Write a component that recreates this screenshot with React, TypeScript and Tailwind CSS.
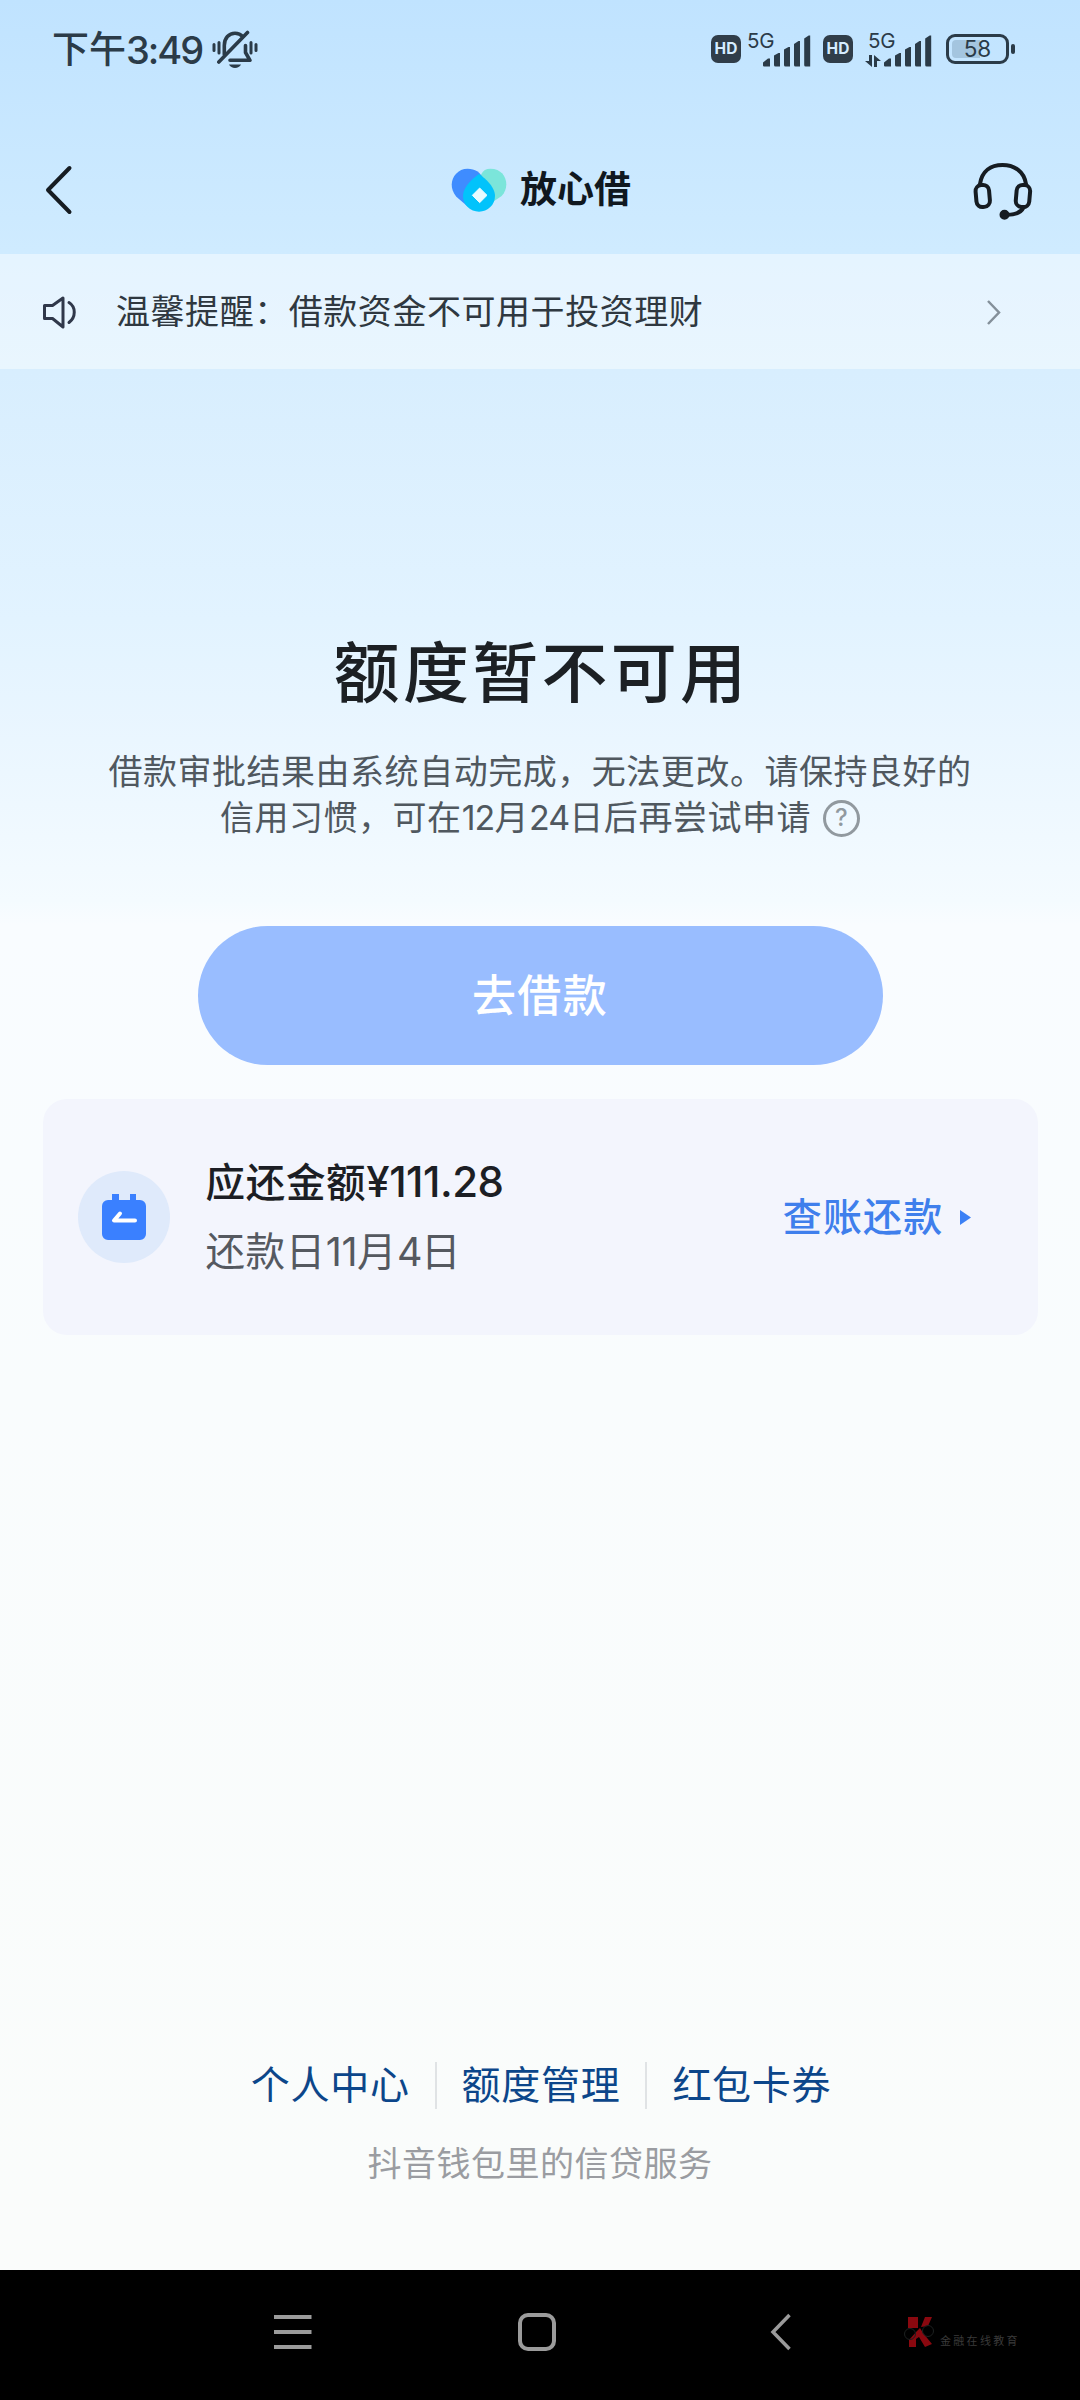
import type { ReactNode } from "react";

const INK = "#2b3b48";

function MutedBell() {
  return (
    <svg className="ml-[10px] h-[40px] w-[46px]" viewBox="0 0 46 40" fill="none" stroke={INK} strokeLinecap="round">
      <path d="M2 14.500v6M7 12.500v10.500M44 14.500v6M39 12.500v10.500" strokeWidth="3" />
      <path d="M12.300 24.500V15.500C12.300 8 17 3.200 23 3.200C26.500 3.200 29 4.600 30.800 6.600" strokeWidth="3.600" />
      <path d="M35.500 2.500L6.800 32" strokeWidth="3.600" />
      <path d="M33.500 15.500V22.500L38 30.300H18" strokeWidth="3.600" strokeLinejoin="round" />
      <path d="M17 34.500h12c-2 4.500-10 4.500-12 0z" fill={INK} stroke="none" />
    </svg>
  );
}

function HdBadge() {
  return (
    <span className="flex h-[28px] w-[30px] items-center justify-center rounded-[7px] bg-[#303d49] font-['Inter'] text-[15.500px] leading-none font-bold text-[#d5ecff]">
      HD
    </span>
  );
}

function Bars({ className }: { className: string }) {
  return (
    <svg className={className} viewBox="16 4 48 32" fill={INK}>
      <path d="M16 33.500v-2l5-4h2v8h-5.500a1.500 1.500 0 0 1-1.500-2z" />
      <path d="M27 24.500l4.500-2.500h1.500v13.500h-4.500a1.500 1.500 0 0 1-1.500-1.500z" />
      <path d="M37 18.500l4.500-2.500h1.500v19.500h-4.500a1.500 1.500 0 0 1-1.500-1.500z" />
      <path d="M47 13l4.500-3h1.500v25.500h-4.500a1.500 1.500 0 0 1-1.500-1.500z" />
      <path d="M57.200 7.500l4.500-3h1.500v31h-4.500a1.500 1.500 0 0 1-1.500-1.500z" />
    </svg>
  );
}

function Signal({ data = false }: { data?: boolean }) {
  return (
    <span className="relative flex h-[36px] items-end">
      <span className={`absolute -top-[4px] font-['Inter'] text-[20.500px] leading-[28px] tracking-[-0.300px] whitespace-nowrap text-[#2b3b48] ${data ? "left-[4px]" : "left-0"}`}>
        5G
      </span>
      {data && (
        <svg className="ml-px h-[12px] w-[16px]" viewBox="0 0 16 12" fill={INK}>
          <path d="M4 0h3v12L0 6h4zM9 12h3V6h4L9 0z" />
        </svg>
      )}
      <Bars className={data ? "ml-[3px] h-[32px] w-[48px]" : "ml-[16px] h-[32px] w-[48px]"} />
    </span>
  );
}

function Battery() {
  return (
    <span className="flex items-center gap-[2px]">
      <span className="flex h-[30px] w-[63px] items-center rounded-[9px] border-[3px] border-[#2b3b48] p-[3px]">
        <span className="flex h-full w-full items-center justify-center rounded-[4px] bg-linear-to-r from-[#a4c5df] from-55% to-transparent to-55% font-['Inter'] text-[22.500px] leading-none text-[#2b3b48]">
          58
        </span>
      </span>
      <span className="h-[10px] w-[4px] rounded-[2px] bg-[#2b3b48]" />
    </span>
  );
}

function BrandMark() {
  return (
    <svg className="h-[44px] w-[56px]" viewBox="0 0 168 132" fill="none">
      <path d="M118 2C92 2 84 24 84 60V130L152 84C178 58 168 2 118 2Z" fill="#7be5da" />
      <path d="M50 2C8 2-14 52 16 86L58 122L98 82V34C88 12 72 2 50 2Z" fill="#3f8cff" />
      <path d="M84 18C72 26 36 54 36 84A48 47 0 0 0 132 84C132 54 96 26 84 18Z" fill="#02c3fb" />
      <path d="M86 60L108 82L86 104L64 82Z" fill="#e9fbff" stroke="#e9fbff" strokeWidth="3" strokeLinejoin="round" />
    </svg>
  );
}

function Headset() {
  return (
    <svg className="mt-[3px] h-[58px] w-[60px]" viewBox="0 0 60 58" fill="none" stroke="#161c22" strokeWidth="4" strokeLinecap="round">
      <path d="M7 22C9 9 18 3 29.500 3S51 9 53 22" />
      <rect x="3" y="23" width="13.500" height="22" rx="6" transform="rotate(-5 9.500 34)" />
      <rect x="43.200" y="23" width="13.500" height="22" rx="6" transform="rotate(5 50 34)" />
      <path d="M50.500 45.500C48 50.500 41 53 33 52.800" />
      <circle cx="31.500" cy="52.800" r="3" fill="#161c22" />
    </svg>
  );
}

function FooterLink({ children }: { children: ReactNode }) {
  return <span className="text-[39px] leading-[48px] tracking-[0.700px] text-[#0c468a]">{children}</span>;
}

export default function App() {
  return (
    <div className="flex h-[2400px] w-[1080px] flex-col overflow-hidden bg-[linear-gradient(180deg,#c0e3ff_0px,#cfebff_250px,#d8eefe_372px,#e2f3ff_620px,#eaf6ff_740px,#f4fbff_900px,#f9fcff_925px,#f9fcfd_1400px,#fafcfb_2200px)] font-['Inter','Noto_Sans_CJK_SC',sans-serif]">
      <header className="flex h-[100px] items-center pr-[65px] pl-[52px]">
        <span className="text-[37px] leading-[50px] font-medium text-[#2b3b48]">下午</span>
        <span className="text-[38px] leading-[50px] font-medium tracking-[-2px] text-[#2b3b48]">3:49</span>
        <MutedBell />
        <div className="ml-auto flex items-center pb-[2px]">
          <HdBadge />
          <span className="ml-[6px]"><Signal /></span>
          <span className="ml-[12px]"><HdBadge /></span>
          <span className="ml-[11px]"><Signal data /></span>
          <span className="ml-[14px]"><Battery /></span>
        </div>
      </header>

      <nav className="flex h-[154px] items-center justify-between pt-[25px] pr-[47px] pl-[44px]">
        <svg className="h-[50px] w-[60px]" viewBox="0 0 60 50" fill="none" stroke="#161c22" strokeWidth="4" strokeLinecap="round" strokeLinejoin="round">
          <path d="M25.500 3L4 25L25.500 47" />
        </svg>
        <div className="flex items-center pl-[5px]">
          <BrandMark />
          <span className="ml-[13px] text-[37px] leading-[44px] font-bold text-[#10181f]">放心借</span>
        </div>
        <Headset />
      </nav>

      <section className="flex h-[115px] items-center bg-white/45 pr-[75px] pl-[41px]">
        <svg className="h-[34px] w-[38px]" viewBox="0 0 38 34" fill="none" stroke="#30384a" strokeWidth="3">
          <path d="M3.500 10.500v13h8L22 32V3L11.500 10.500z" strokeLinejoin="round" />
          <path d="M28 7.500C35 12 35 22 28 27.500" strokeLinecap="round" />
        </svg>
        <span className="mt-px ml-[37px] text-[34px] leading-[44px] tracking-[0.550px] text-[#2f3840]">温馨提醒：借款资金不可用于投资理财</span>
        <svg className="mt-px ml-auto h-[28px] w-[20px]" viewBox="0 0 20 28" fill="none" stroke="#84909a" strokeWidth="2.500">
          <path d="M3 3L14 14.500L3 26" />
        </svg>
      </section>

      <main className="flex flex-1 flex-col items-center">
        <h1 className="mt-[254px] pl-[3px] text-[66px] leading-[100px] font-medium tracking-[3.300px] text-[#1c2024]">额度暂不可用</h1>
        <p className="mt-[26px] text-center text-[34px] leading-[46px] tracking-[0.530px] text-[#50585f]">
          借款审批结果由系统自动完成，无法更改。请保持良好的
          <br />
          <span className="flex items-center justify-center">
            <span>
              信用习惯，可在<span className="tracking-[-0.900px]">12</span>月<span className="tracking-[-0.900px]">24</span>日后再尝试申请
            </span>
            <span className="ml-[12px] flex h-[37px] w-[37px] items-center justify-center rounded-full border-[3px] border-[#91999f] text-[24px] leading-none font-medium text-[#91999f]">?</span>
          </span>
        </p>
        <button className="mt-[85px] h-[139px] w-[685px] rounded-full bg-[#99bdff] text-[44px] font-medium tracking-[1.300px] text-white">去借款</button>

        <section className="mt-[34px] flex h-[236px] w-[995px] items-center rounded-[24px] bg-[#f3f5fd] pr-[67px] pl-[35px]">
          <span className="flex h-[92px] w-[92px] items-center justify-center rounded-full bg-[#dfeafb]">
            <svg className="h-[46px] w-[44px]" viewBox="0 0 44 46">
              <path d="M10 0h7v6h11V0h6v6h4a6 6 0 0 1 6 6v28a6 6 0 0 1-6 6H6a6 6 0 0 1-6-6V12a6 6 0 0 1 6-6h4z" fill="#3a80ff" />
              <path d="M18 19.500L12 26.500H33" fill="none" stroke="#fff" strokeWidth="4" strokeLinecap="round" strokeLinejoin="round" />
            </svg>
          </span>
          <div className="ml-[36px] flex flex-col">
            <span className="text-[39.500px] leading-[60px] font-medium tracking-[0.700px] text-[#1c1e24]">
              应还金额<span className="text-[42px] tracking-[-0.500px]">¥111.28</span>
            </span>
            <span className="mt-[9px] text-[39.500px] leading-[60px] tracking-[0.600px] text-[#555960]">
              还款日<span className="tracking-[-0.500px]">11</span>月<span className="tracking-[-1.500px]">4</span>日
            </span>
          </div>
          <span className="ml-auto text-[39px] leading-[60px] font-medium tracking-[1.200px] text-[#3f7fec]">查账还款</span>
          <svg className="ml-[16px] h-[15px] w-[11px]" viewBox="0 0 11 15" fill="#3b80f5">
            <path d="M0 0L11 7.500L0 15z" />
          </svg>
        </section>

        <footer className="mt-auto flex flex-col items-center pb-[83px]">
          <div className="flex items-center gap-[25px] pl-[2px]">
            <FooterLink>个人中心</FooterLink>
            <span className="h-[47px] w-[2px] bg-[#e0e3e5]" />
            <FooterLink>额度管理</FooterLink>
            <span className="h-[47px] w-[2px] bg-[#e0e3e5]" />
            <FooterLink>红包卡券</FooterLink>
          </div>
          <span className="mt-[32px] text-[34px] leading-[46px] tracking-[0.500px] text-[#9a9ca1]">抖音钱包里的信贷服务</span>
        </footer>
      </main>

      <div className="flex h-[130px] items-center bg-black pb-[6px] pl-[274px]">
        <svg className="h-[36px] w-[38px]" viewBox="0 0 38 36" stroke="#9b9b9b" strokeWidth="4">
          <path d="M0 3h37.500M0 18h37.500M0 33h37.500" />
        </svg>
        <span className="ml-[206px] h-[38px] w-[38px] rounded-[10px] border-[4px] border-[#9b9b9b]" />
        <svg className="ml-[214px] h-[38px] w-[22px]" viewBox="0 0 22 38" fill="none" stroke="#9b9b9b" strokeWidth="3.500">
          <path d="M19.500 2L3 19L19.500 36" />
        </svg>
        <svg className="ml-[112px] h-[34px] w-[30px]" viewBox="0 0 30 34" fill="#8a080f">
          <path d="M4 2h10v11H4zM17 12L21 2h7l-4 9zM5 25l8-9 3-3 3 5 9 11-7 3-6-10-3 2v8H5z" />
          <g fill="none" stroke="#1d2020" strokeWidth="1">
            <circle cx="6" cy="19" r="5.500" />
            <circle cx="24" cy="16" r="5.500" />
          </g>
        </svg>
        <span className="mt-[17px] ml-[6px] text-[11px] leading-[14px] tracking-[2.300px] text-[#3a3a3a]">金融在线教育</span>
      </div>
    </div>
  );
}
